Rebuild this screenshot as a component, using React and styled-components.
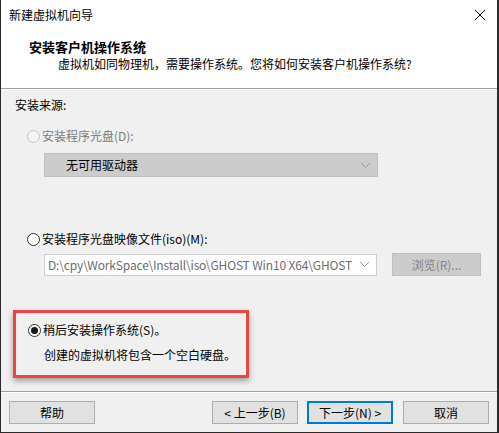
import React from "react"
import styled, { createGlobalStyle } from "styled-components"

const GlobalStyle = createGlobalStyle`
  html, body {
    margin: 0;
    padding: 0;
    background: #ffffff;
  }
  * {
    box-sizing: border-box;
  }
`

const uiFont = `"Noto Sans CJK SC", "Microsoft YaHei", sans-serif`

const Radio = ({ checked, disabled }) => (
  <RadioDot $checked={checked} $disabled={disabled} />
)

const Chevron = ({ color }) => (
  <svg width="11" height="7" viewBox="0 0 11 7">
    <path d="M1 1 L5.5 5.5 L10 1" fill="none" stroke={color} strokeWidth="1" />
  </svg>
)

const CloseIcon = () => (
  <svg width="12" height="12" viewBox="0 0 12 12">
    <path d="M1 1 L11 11 M11 1 L1 11" stroke="#111" strokeWidth="1" fill="none" />
  </svg>
)

const App = () => {
  return (
    <>
      <GlobalStyle />
      <Window>
        <Header>
          <TitleBar>
            <Title>新建虚拟机向导</Title>
            <CloseBtn>
              <CloseIcon />
            </CloseBtn>
          </TitleBar>
          <Heading>安装客户机操作系统</Heading>
          <SubHeading>虚拟机如同物理机，需要操作系统。您将如何安装客户机操作系统?</SubHeading>
        </Header>

        <Body>
          <Label>安装来源:</Label>

          <RadioRow $top={15} $disabled>
            <Radio disabled />
            <span>安装程序光盘(D):</span>
          </RadioRow>
          <Combo $disabled>
            <ComboText>无可用驱动器</ComboText>
            <Chevron color="#9a9a9a" />
          </Combo>

          <RadioRow $top={54}>
            <Radio />
            <span>安装程序光盘映像文件(iso)(M):</span>
          </RadioRow>
          <FileRow>
            <FileInput>
              <FileText>D:\cpy\WorkSpace\Install\iso\GHOST Win10 X64\GHOST</FileText>
              <Chevron color="#9a9a9a" />
            </FileInput>
            <BrowseBtn>浏览(R)...</BrowseBtn>
          </FileRow>

          <Highlight>
            <RadioRow $top={0}>
              <Radio checked />
              <span>稍后安装操作系统(S)。</span>
            </RadioRow>
            <Note>创建的虚拟机将包含一个空白硬盘。</Note>
          </Highlight>
        </Body>

        <Footer>
          <Button>帮助</Button>
          <ButtonGroup>
            <Button>&lt; 上一步(B)</Button>
            <Button $primary>下一步(N) &gt;</Button>
            <Button $gap>取消</Button>
          </ButtonGroup>
        </Footer>
      </Window>
    </>
  )
}

const Window = styled.div`
  width: 499px;
  height: 433px;
  display: flex;
  flex-direction: column;
  border-left: 1px solid #2b2b2b;
  border-right: 2px solid #2b2b2b;
  border-bottom: 1px solid #2b2b2b;
  font-family: ${uiFont};
  font-size: 12px;
  color: #000;
  background: #f0f0f0;
  overflow: hidden;
`

const Header = styled.div`
  height: 89px;
  background: #ffffff;
  border-bottom: 1px solid #a0a0a0;
  display: flex;
  flex-direction: column;
  flex-shrink: 0;
`

const TitleBar = styled.div`
  height: 30px;
  display: flex;
  align-items: center;
  justify-content: space-between;
  padding: 0 10px 0 8px;
`

const Title = styled.div`
  line-height: 16px;
`

const CloseBtn = styled.div`
  width: 14px;
  height: 14px;
  display: flex;
  align-items: center;
  justify-content: center;
`

const Heading = styled.div`
  margin: 9px 0 0 28px;
  font-size: 13px;
  font-weight: bold;
  line-height: 16px;
`

const SubHeading = styled.div`
  margin: 1px 0 0 57px;
  line-height: 16px;
`

const Body = styled.div`
  flex: 1;
  display: flex;
  flex-direction: column;
  padding: 7px 0 0 14px;
  border-top: 1px solid #ffffff;
`

const Label = styled.div`
  line-height: 16px;
`

const RadioRow = styled.div`
  display: flex;
  align-items: center;
  gap: 2px;
  margin: ${p => p.$top}px 0 0 12px;
  line-height: 16px;
  color: ${p => (p.$disabled ? "#7a7a7a" : "#000")};
`

const RadioDot = styled.span`
  width: 13px;
  height: 13px;
  border-radius: 50%;
  border: 1px solid ${p => (p.$disabled ? "#c4c4c4" : "#333")};
  background: ${p => (p.$disabled ? "#f4f4f4" : "#fff")};
  display: flex;
  align-items: center;
  justify-content: center;
  flex-shrink: 0;

  &::after {
    content: '';
    width: 7px;
    height: 7px;
    border-radius: 50%;
    background: #1a1a1a;
    display: ${p => (p.$checked ? "block" : "none")};
  }
`

const Combo = styled.div`
  margin: 9px 0 0 29px;
  width: 334px;
  height: 24px;
  background: #cccccc;
  border: 1px solid #bfbfbf;
  display: flex;
  align-items: center;
  justify-content: space-between;
  padding: 0 6px 0 21px;
`

const ComboText = styled.span`
  line-height: 16px;
`

const FileRow = styled.div`
  margin: 6px 0 0 29px;
  display: flex;
  align-items: center;
  gap: 15px;
`

const FileInput = styled.div`
  width: 333px;
  height: 22px;
  background: #fff;
  border: 1px solid #cccccc;
  display: flex;
  align-items: center;
  justify-content: space-between;
  padding: 0 6px 0 3px;
`

const FileText = styled.span`
  white-space: nowrap;
  color: #6d6d6d;
  letter-spacing: -0.15px;
  line-height: 16px;
`

const BrowseBtn = styled.div`
  width: 89px;
  height: 23px;
  background: #cccccc;
  border: 1px solid #bfbfbf;
  color: #838383;
  display: flex;
  align-items: center;
  justify-content: center;
`

const Highlight = styled.div`
  margin: 34px 0 0 -2px;
  width: 236px;
  height: 68px;
  border: 3px solid #ee4346;
  box-shadow: 0 3px 6px rgba(0, 0, 0, 0.35);
  display: flex;
  flex-direction: column;
  padding-top: 9px;
`

const Note = styled.div`
  margin: 9px 0 0 28px;
  line-height: 16px;
`

const Footer = styled.div`
  height: 41px;
  flex-shrink: 0;
  border-top: 1px solid #a0a0a0;
  box-shadow: inset 0 1px 0 #ffffff;
  display: flex;
  align-items: flex-start;
  justify-content: space-between;
  padding: 9px 8px 0 8px;
`

const ButtonGroup = styled.div`
  display: flex;
  gap: 9px;
`

const Button = styled.div`
  width: 86px;
  height: 23px;
  background: #e1e1e1;
  border: ${p => (p.$primary ? "2px solid #0078d7" : "1px solid #adadad")};
  display: flex;
  align-items: center;
  justify-content: center;
  line-height: 16px;
  margin-left: ${p => (p.$gap ? "1px" : "0")};
`

export default App
